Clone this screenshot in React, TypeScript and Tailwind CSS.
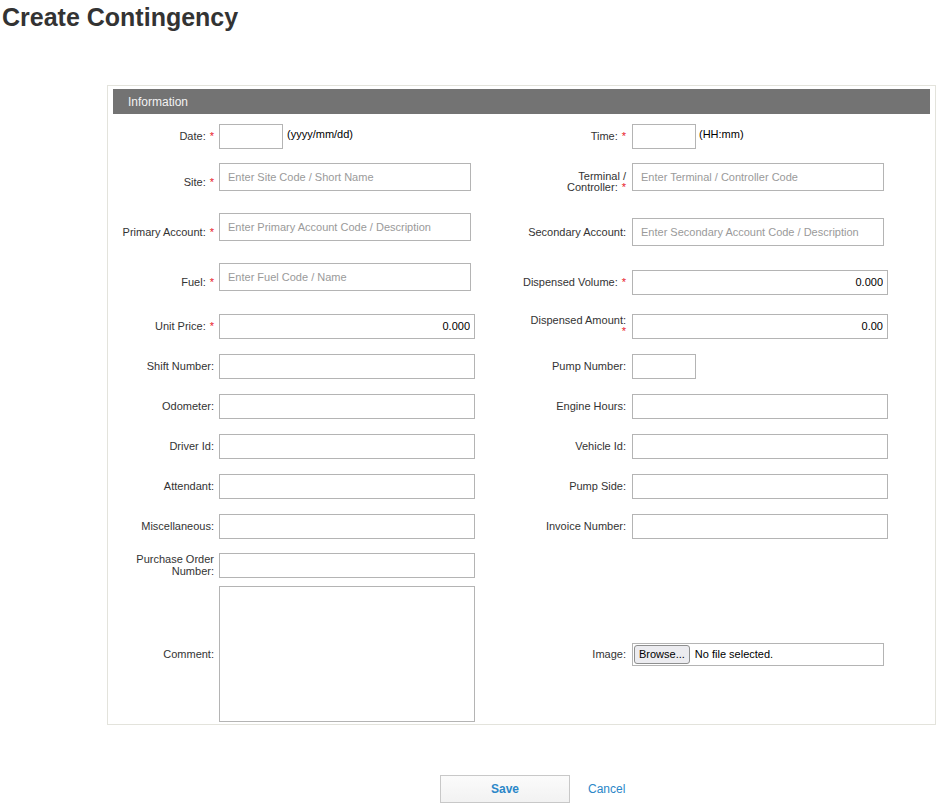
import React from "react";

const Req = () => <span className="text-[#e8202a] ml-[4px]">*</span>;

function Label({ children }: { children: React.ReactNode }) {
  return (
    <div className="w-[106px] shrink-0 text-right leading-[11px] text-[#333]">{children}</div>
  );
}
function RLabel({ children }: { children: React.ReactNode }) {
  return (
    <div className="w-[107px] shrink-0 text-right leading-[11px] text-[#333]">{children}</div>
  );
}

function TextBox({ w = 256, value, right }: { w?: number; value?: string; right?: boolean }) {
  return (
    <input
      readOnly
      value={value ?? ""}
      style={{ width: w }}
      className={`h-[25px] border border-[#b4b4b4] bg-white px-[4px] text-[11px] text-black outline-none ${right ? "text-right" : ""}`}
    />
  );
}

function AutoBox({ placeholder, flat }: { placeholder: string; flat?: boolean }) {
  return (
    <input
      readOnly
      placeholder={placeholder}
      className={`h-[28px] w-[252px] border border-[#b4b4b4] bg-white px-[8px] text-[11px] text-black outline-none placeholder:text-[#9a9a9a] ${flat ? "" : "mb-[10px]"}`}
    />
  );
}

function Row({ h, left, right }: { h: number; left: React.ReactNode; right?: React.ReactNode }) {
  return (
    <div className="flex" style={{ height: h }}>
      <div className="flex w-[411px] shrink-0 items-center gap-[5px]">{left}</div>
      <div className="flex flex-1 items-center gap-[6px]">{right}</div>
    </div>
  );
}

export default function App() {
  return (
    <div
      className="min-h-[812px] w-[940px] bg-white text-[11px] text-[#333]"
      style={{ fontFamily: '"Liberation Sans", Arial, sans-serif' }}
    >
      <h1 className="pl-[2px] pt-[3px] text-[25px] font-bold leading-[28px] text-[#333]">
        Create Contingency
      </h1>

      <div className="ml-[107px] mt-[54px] h-[640px] w-[829px] border border-[#e3e3dc] px-[5px] pt-[3px]">
        <div className="flex h-[25px] items-center bg-[#737373] pl-[15px] text-[12px] text-[#f2f2f2]">
          Information
        </div>
        <div className="-mx-[5px]">
          <Row
            h={44}
            left={
              <>
                <Label>
                  Date:<Req />
                </Label>
                <TextBox w={64} />
                <span className="-mt-[4px] ml-[-1px] text-black">(yyyy/mm/dd)</span>
              </>
            }
            right={
              <>
                <RLabel>
                  Time:<Req />
                </RLabel>
                <TextBox w={64} />
                <span className="-mt-[4px] -ml-[3px] text-black">(HH:mm)</span>
              </>
            }
          />
          <Row
            h={48}
            left={
              <>
                <Label>
                  Site:<Req />
                </Label>
                <AutoBox placeholder="Enter Site Code / Short Name" />
              </>
            }
            right={
              <>
                <RLabel>
                  Terminal /
                  <br />
                  Controller:<Req />
                </RLabel>
                <AutoBox placeholder="Enter Terminal / Controller Code" />
              </>
            }
          />
          <Row
            h={52}
            left={
              <>
                <Label>
                  Primary Account:<Req />
                </Label>
                <AutoBox placeholder="Enter Primary Account Code / Description" />
              </>
            }
            right={
              <>
                <RLabel>Secondary Account:</RLabel>
                <AutoBox flat placeholder="Enter Secondary Account Code / Description" />
              </>
            }
          />
          <Row
            h={48}
            left={
              <>
                <Label>
                  Fuel:<Req />
                </Label>
                <AutoBox placeholder="Enter Fuel Code / Name" />
              </>
            }
            right={
              <>
                <RLabel>
                  Dispensed Volume:<Req />
                </RLabel>
                <TextBox value="0.000" right />
              </>
            }
          />
          <Row
            h={40}
            left={
              <>
                <Label>
                  Unit Price:<Req />
                </Label>
                <TextBox value="0.000" right />
              </>
            }
            right={
              <>
                <RLabel>
                  Dispensed Amount:
                  <br />
                  <span className="text-[#e8202a]">*</span>
                </RLabel>
                <TextBox value="0.00" right />
              </>
            }
          />
          <Row
            h={40}
            left={
              <>
                <Label>Shift Number:</Label>
                <TextBox />
              </>
            }
            right={
              <>
                <RLabel>Pump Number:</RLabel>
                <TextBox w={64} />
              </>
            }
          />
          <Row
            h={40}
            left={
              <>
                <Label>Odometer:</Label>
                <TextBox />
              </>
            }
            right={
              <>
                <RLabel>Engine Hours:</RLabel>
                <TextBox />
              </>
            }
          />
          <Row
            h={40}
            left={
              <>
                <Label>Driver Id:</Label>
                <TextBox />
              </>
            }
            right={
              <>
                <RLabel>Vehicle Id:</RLabel>
                <TextBox />
              </>
            }
          />
          <Row
            h={40}
            left={
              <>
                <Label>Attendant:</Label>
                <TextBox />
              </>
            }
            right={
              <>
                <RLabel>Pump Side:</RLabel>
                <TextBox />
              </>
            }
          />
          <Row
            h={40}
            left={
              <>
                <Label>Miscellaneous:</Label>
                <TextBox />
              </>
            }
            right={
              <>
                <RLabel>Invoice Number:</RLabel>
                <TextBox />
              </>
            }
          />
          <Row
            h={38}
            left={
              <>
                <Label>
                  <span className="leading-[12px]">
                    Purchase Order
                    <br />
                    Number:
                  </span>
                </Label>
                <TextBox />
              </>
            }
          />
          <Row
            h={140}
            left={
              <>
                <Label>Comment:</Label>
                <textarea
                  readOnly
                  className="h-[136px] w-[256px] resize-none border border-[#b4b4b4] bg-white outline-none"
                />
              </>
            }
            right={
              <>
                <RLabel>Image:</RLabel>
                <div className="flex h-[23px] w-[252px] items-center border border-[#b4b4b4] bg-white pl-[1px]">
                  <div className="flex h-[19px] items-center rounded-[3px] border border-[#8e8f8f] bg-[#ececf0] px-[4px] text-[11px] text-black">
                    Browse...
                  </div>
                  <span className="ml-[5px] text-[11px] text-black">No file selected.</span>
                </div>
              </>
            }
          />
        </div>
      </div>

      <div className="mt-[50px] flex items-center pl-[440px]">
        <button className="h-[28px] w-[130px] border border-[#c8c8c8] bg-gradient-to-b from-[#fbfbfb] to-[#f2f2f2] text-[12px] font-bold text-[#2b87c8]">
          Save
        </button>
        <a className="ml-[18px] text-[12px] text-[#2b87c8]">Cancel</a>
      </div>
    </div>
  );
}
